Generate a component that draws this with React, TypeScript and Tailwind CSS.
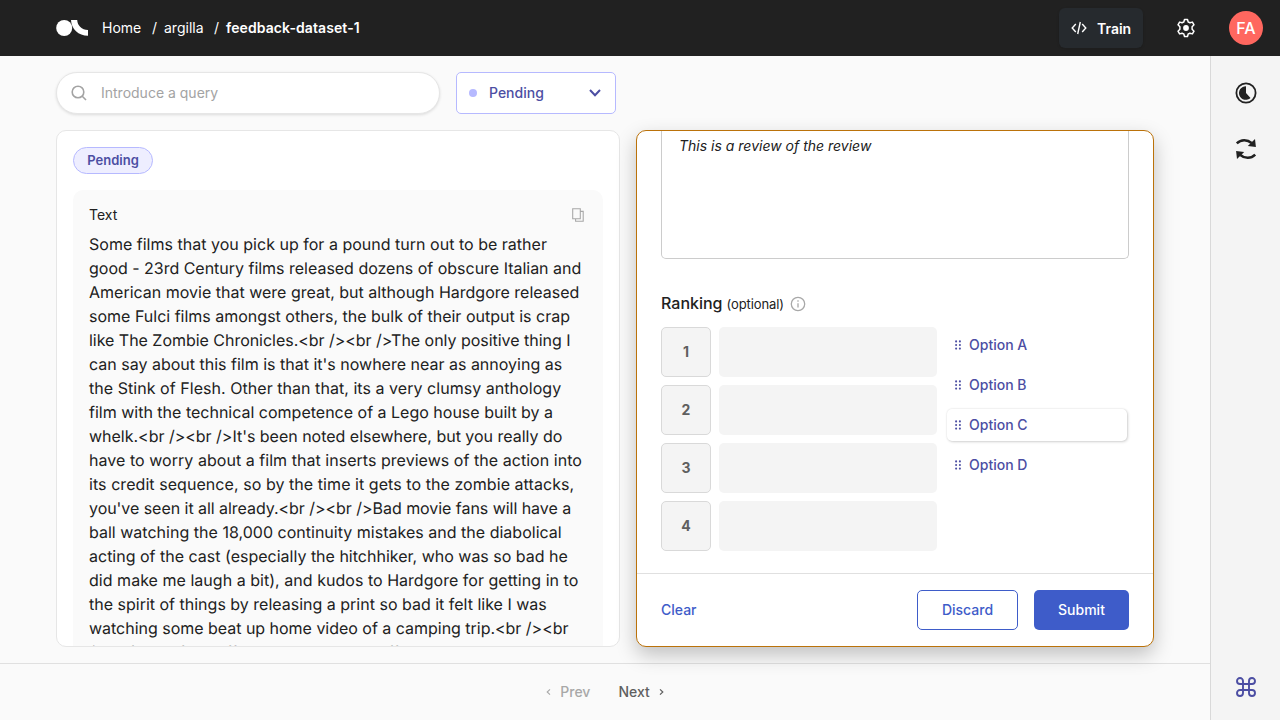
import React from "react";

const reviewLines: [string, string][] = [
  ["Some films that you pick up for a pound turn out to be rather", "tracking-[0.015px]"],
  ["good - 23rd Century films released dozens of obscure Italian and", "tracking-[-0.015px]"],
  ["American movie that were great, but although Hardgore released", ""],
  ["some Fulci films amongst others, the bulk of their output is crap", ""],
  ["like The Zombie Chronicles.<br /><br />The only positive thing I", "tracking-[-0.03px]"],
  ["can say about this film is that it's nowhere near as annoying as", ""],
  ["the Stink of Flesh. Other than that, its a very clumsy anthology", "tracking-[0.045px]"],
  ["film with the technical competence of a Lego house built by a", ""],
  ["whelk.<br /><br />It's been noted elsewhere, but you really do", "tracking-[-0.015px]"],
  ["have to worry about a film that inserts previews of the action into", "tracking-[0.04px]"],
  ["its credit sequence, so by the time it gets to the zombie attacks,", "tracking-[0.06px]"],
  ["you've seen it all already.<br /><br />Bad movie fans will have a", "tracking-[-0.045px]"],
  ["ball watching the 18,000 continuity mistakes and the diabolical", "tracking-[0.015px]"],
  ["acting of the cast (especially the hitchhiker, who was so bad he", ""],
  ["did make me laugh a bit), and kudos to Hardgore for getting in to", "tracking-[0.03px]"],
  ["the spirit of things by releasing a print so bad it felt like I was", ""],
  ["watching some beat up home video of a camping trip.<br /><br", "tracking-[-0.02px]"],
  ["/>Awful, awful stuff. We've all made stuff like this when", ""],
];

function Logo() {
  return (
    <svg width="32" height="16" viewBox="0 0 32 16" fill="#fff">
      <circle cx="8.2" cy="8" r="8" />
      <path d="M15 0H21.2C21.4 5.6 25.8 9.9 32 10V15.8C22.5 15.8 15.3 9.2 15 0Z" />
    </svg>
  );
}

function GearIcon() {
  return (
    <svg width="20" height="20" viewBox="0 0 20 20" fill="none" stroke="#fff" strokeWidth="1.5" strokeLinejoin="round">
      <path d="M8.5 1.5H11.5L12.2 4Q13 4.3 13.9 4.8L16.4 4.1L18 6.8L16.1 8.7V11.3L18 13.2L16.4 15.9L13.9 15.2Q13 15.7 12.2 16L11.5 18.5H8.5L7.8 16Q7 15.7 6.1 15.2L3.6 15.9L2 13.2L3.9 11.3V8.7L2 6.8L3.6 4.1L6.1 4.8Q7 4.3 7.8 4Z" />
      <circle cx="10" cy="10" r="2.9" fill="#fff" stroke="none" />
    </svg>
  );
}

function ProgressIcon() {
  return (
    <svg width="22" height="22" viewBox="0 0 22 22" fill="none">
      <circle cx="11" cy="11" r="9.6" stroke="#212121" strokeWidth="1.8" />
      <path d="M11 4.2V11L15.5 15.9A6.8 6.8 0 1 1 11 4.2Z" fill="#212121" />
    </svg>
  );
}

function RefreshIcon() {
  return (
    <svg width="22" height="22" viewBox="0 0 22 22" fill="none">
      <path d="M1.8 5.4C6 1.2 12.2 1.2 16.6 5M20.2 16.6C16 20.8 9.8 20.8 5.4 17" stroke="#212121" strokeWidth="2.5" />
      <path d="M20 0.9L20.9 9L12.8 8Z M2 21.1L1.1 13L9.2 14Z" fill="#212121" />
    </svg>
  );
}

function CommandIcon() {
  return (
    <svg width="20" height="20" viewBox="0 0 20 20" fill="none" stroke="#4C4EA3" strokeWidth="1.9">
      <path d="M7 7V4A3 3 0 1 0 4 7H16A3 3 0 1 0 13 4V16A3 3 0 1 0 16 13H4A3 3 0 1 0 7 16Z" />
    </svg>
  );
}

function GripIcon() {
  return (
    <svg width="6" height="10" viewBox="0 0 6 10" fill="#4C4EA3">
      {[1.1, 4.9].map((x) => [1.4, 5, 8.6].map((y) => <circle key={`${x}-${y}`} cx={x} cy={y} r="1.05" />))}
    </svg>
  );
}

function Header() {
  return (
    <header className="flex h-14 shrink-0 items-center bg-[#212121] pl-14 pr-[17px] text-white">
      <Logo />
      <nav className="ml-[14px] flex items-center text-sm leading-5">
        <span className="w-[50px]">Home</span>
        <span className="w-3">/</span>
        <span className="w-[50px]">argilla</span>
        <span className="w-3">/</span>
        <span className="font-semibold tracking-[0.09px]">feedback-dataset-1</span>
      </nav>
      <button className="ml-auto flex h-10 w-21 items-center rounded-md bg-[#262A2E] pl-3 text-sm font-semibold shadow">
        <svg width="16" height="14" viewBox="0 0 16 14" fill="none" stroke="#fff" strokeWidth="1.4">
          <path d="M4.8 3L1.2 7L4.8 11M11.2 3L14.8 7L11.2 11M9.3 1L6.7 13" />
        </svg>
        <span className="ml-[10px] pt-0.5">Train</span>
      </button>
      <div className="ml-[33px]"><GearIcon /></div>
      <div className="ml-[33px] flex size-[34px] items-center justify-center rounded-full bg-[#FF675F] text-base font-medium">FA</div>
    </header>
  );
}

function RecordCard() {
  return (
    <section className="flex h-[517px] w-[564px] flex-col overflow-hidden rounded-[10px] border border-[#E6E6E6] bg-white px-4 pt-4">
      <span className="flex h-[27px] w-20 shrink-0 items-center justify-center rounded-full border border-[#B6B9FF] bg-[#EEEEFF] text-[13px] font-semibold text-[#4C4EA3]">Pending</span>
      <div className="mt-4 min-h-0 w-[530px] flex-1 overflow-hidden rounded-t-[10px] bg-[#FAFAFA] px-4 pt-4">
        <div className="flex h-[18px] items-center justify-between pr-[3px] text-sm">
          <span>Text</span>
          <svg width="12" height="14" viewBox="0 0 12 14" fill="none" stroke="#A8A8A8" strokeWidth="1.1">
            <path d="M0.7 0.7H8.3V10.8H0.7ZM8.3 3.4H11.2V13.2H3.6V10.8" />
          </svg>
        </div>
        <p className="mt-2 whitespace-nowrap text-base leading-6 [text-rendering:geometricPrecision]">
          {reviewLines.map(([line, tracking]) => (
            <span key={line} className={`block ${tracking}`}>{line}</span>
          ))}
        </p>
      </div>
    </section>
  );
}

function Ranking() {
  return (
    <div className="flex">
      <div className="flex flex-col gap-2">
        {[1, 2, 3, 4].map((n) => (
          <div key={n} className="flex gap-2">
            <div className="flex size-[50px] items-center justify-center rounded-[5px] border border-[#D9D9D9] bg-[#F4F4F4] text-sm font-bold text-[#5F5F5F]">{n}</div>
            <div className="h-[50px] w-[218px] rounded-[5px] bg-[#F4F4F4]" />
          </div>
        ))}
      </div>
      <div className="ml-[10px] mt-[2px] flex flex-col gap-2">
        {["A", "B", "C", "D"].map((o) => (
          <div
            key={o}
            className={`flex h-8 w-[180px] items-center gap-2 rounded-[5px] pl-2 text-sm font-medium text-[#4C4EA3] ${o === "C" ? "shadow-[0_0_2px_rgba(0,0,0,0.12),1px_1px_3px_rgba(0,0,0,0.16)]" : ""}`}
          >
            <GripIcon />
            <span>Option {o}</span>
          </div>
        ))}
      </div>
    </div>
  );
}

function FormCard() {
  return (
    <section className="relative flex h-[517px] w-[518px] flex-col overflow-hidden rounded-[10px] border border-[#BB720A] bg-white shadow-[0_8px_20px_rgba(0,0,0,0.23)]">
      <div className="h-[442px] px-6">
        <div className="h-32 rounded-b-[5px] border border-t-0 border-[#CCCCCC] pl-[17px] pt-1 text-sm italic leading-[22px]">This is a review of the review</div>
        <div className="mb-[12px] mt-[32px] flex h-6 items-center">
          <span className="text-base font-medium">Ranking</span>
          <span className="ml-1 pt-[3px] text-[13px] tracking-[-0.1px]">(optional)</span>
          <svg className="ml-[6px] mt-px" width="16" height="16" viewBox="0 0 16 16" fill="none" stroke="#A8A8A8" strokeWidth="1.3">
            <circle cx="8" cy="8" r="6.7" />
            <path d="M8 7.2V11.5M8 4.3V5.8" />
          </svg>
        </div>
        <Ranking />
      </div>
      <footer className="flex flex-1 items-center border-t border-[#E0E0E0] px-6 text-sm font-medium text-[#3E5CC9]">
        <button>Clear</button>
        <button className="ml-auto h-10 w-[101px] rounded-[5px] border border-[#3E5CC9]">Discard</button>
        <button className="ml-4 h-10 w-[95px] rounded-[5px] bg-[#3E5CC9] text-white">Submit</button>
      </footer>
    </section>
  );
}

export default function App() {
  return (
    <div className="flex h-[720px] w-[1280px] flex-col overflow-hidden bg-[#FAFAFA] font-['Inter',sans-serif] text-[#212121]">
      <Header />
      <div className="flex min-h-0 flex-1">
        <main className="flex w-[1210px] flex-col">
          <div className="flex gap-4 pl-14 pt-4">
            <div className="flex h-[42px] w-96 items-center rounded-full border border-[#E6E6E6] bg-white pl-[14px] text-sm text-[#A3A3A3] shadow-[0_1px_3px_rgba(0,0,0,0.12)]">
              <svg width="16" height="16" viewBox="0 0 16 16" fill="none" stroke="#A3A3A3" strokeWidth="1.6">
                <circle cx="7" cy="7" r="5.8" />
                <path d="M11 11L15 15" />
              </svg>
              <span className="ml-[14px]">Introduce a query</span>
            </div>
            <div className="flex h-[42px] w-40 items-center rounded-[5px] border border-[#B6B9FF] bg-white pl-3 pr-[14px] text-sm font-medium text-[#4C4EA3]">
              <span className="size-2 rounded-full bg-[#B6B9FF]" />
              <span className="ml-3">Pending</span>
              <svg className="ml-auto" width="12" height="8" viewBox="0 0 12 8" fill="none" stroke="#4C4EA3" strokeWidth="2">
                <path d="M1 1L6 6.2L11 1" />
              </svg>
            </div>
          </div>
          <div className="flex gap-4 pl-14 pt-4">
            <RecordCard />
            <FormCard />
          </div>
          <div className="mt-4 flex flex-1 items-center justify-center border-t border-[#E0E0E0] text-sm font-medium">
            <button className="flex items-center gap-[9px] text-[#A8A8A8]">
              <svg width="5" height="6" viewBox="0 0 5 6" fill="none" stroke="currentColor" strokeWidth="1.1"><path d="M4 .4L1.2 3L4 5.6" /></svg>
              <span>Prev</span>
            </button>
            <button className="ml-7 flex items-center gap-[9px] text-[#5F5F5F]">
              <span>Next</span>
              <svg width="5" height="6" viewBox="0 0 5 6" fill="none" stroke="currentColor" strokeWidth="1.2"><path d="M1 .4L3.8 3L1 5.6" /></svg>
            </button>
          </div>
        </main>
        <aside className="flex w-[70px] flex-col items-center border-l border-[#D9D9D9] bg-[#F4F4F4] pb-[23px] pt-[26px]">
          <ProgressIcon />
          <div className="mt-[34px]"><RefreshIcon /></div>
          <div className="mt-auto"><CommandIcon /></div>
        </aside>
      </div>
    </div>
  );
}
